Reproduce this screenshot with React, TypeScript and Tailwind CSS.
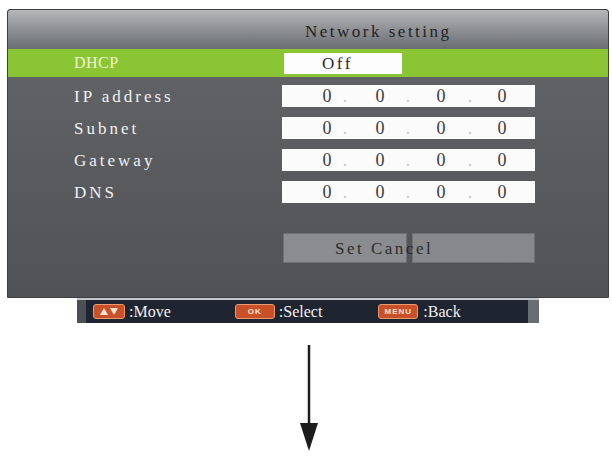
import React from "react";

const serif = { fontFamily: '"Liberation Serif", "DejaVu Serif", serif' };

type RowProps = {
  label: string;
};

function IpRow({ label }: RowProps) {
  return (
    <div className="flex items-center h-[22px]">
      <div className="w-[274px] pl-[66px] text-[17px] tracking-[3px] text-[#f1f1f1] leading-none" style={serif}>
        {label}
      </div>
      <div className="flex items-center w-[253px] h-[22px] bg-[#fbfbfb] text-[18px] text-[#3a3a3a] leading-none" style={serif}>
        <span className="ml-[39px] w-[12px] text-center">0</span>
        <span className="ml-[6px] w-[12px] text-center text-[#c8c8c8]">.</span>
        <span className="ml-[23px] w-[12px] text-center">0</span>
        <span className="ml-[16px] w-[12px] text-center text-[#c8c8c8]">.</span>
        <span className="ml-[21px] w-[12px] text-center">0</span>
        <span className="ml-[17px] w-[12px] text-center text-[#c8c8c8]">.</span>
        <span className="ml-[20px] w-[12px] text-center">0</span>
      </div>
    </div>
  );
}

function KeyCap({ children, w }: { children: React.ReactNode; w: string }) {
  return (
    <span
      className={`${w} h-[15px] flex items-center justify-center rounded-[3px] bg-[#c9512a] border border-[#eb9a6c] text-[8px] font-bold text-[#fbe3d2] leading-none tracking-[1px]`}
      style={{ fontFamily: '"Liberation Sans", Arial, sans-serif' }}
    >
      {children}
    </span>
  );
}

export default function App() {
  const rows = ["IP address", "Subnet", "Gateway", "DNS"];

  return (
    <div className="w-[612px] h-[456px] bg-white flex flex-col overflow-hidden">
      <div className="ml-[7px] mt-[9px] w-[602px] h-[289px] flex flex-col bg-gradient-to-b from-[#65676b] via-[#5a5c60] to-[#505256] border border-[#3c3e42] rounded-t-[3px]">
        <div className="h-[39px] flex items-center pl-[297px] pt-[3px] bg-gradient-to-b from-[#b5b7ba] via-[#8e9094] to-[#6a6d72] rounded-t-[3px]">
          <span className="text-[17px] tracking-[2.5px] text-[#222222] leading-none" style={serif}>
            Network setting
          </span>
        </div>

        <div className="h-[28px] flex items-center bg-[#8ac634]">
          <div className="w-[276px] pl-[66px] text-[16px] tracking-[0.5px] text-[#f3f7cf] leading-none" style={serif}>
            DHCP
          </div>
          <div className="w-[118px] h-[21px] bg-[#fdfdfd] flex items-center pl-[38px] text-[17px] tracking-[2.5px] text-[#2a2a2a] leading-none" style={serif}>
            Off
          </div>
        </div>

        <div className="flex flex-col gap-[10px] pt-[8px]">
          {rows.map((r) => (
            <IpRow key={r} label={r} />
          ))}
        </div>

        <div className="flex mt-[30px] ml-[275px] h-[30px] gap-[5px]">
          <div className="relative z-10 w-[124px] h-[30px] bg-[#8a8c8f] border border-[#6e7073] flex items-center">
            <span className="ml-[51px] whitespace-nowrap text-[17px] tracking-[2.5px] text-[#2b2c2e] leading-none" style={serif}>
              Set Cancel
            </span>
          </div>
          <div className="w-[123px] h-[30px] bg-[#88898c] border border-[#6e7073]" />
        </div>
      </div>

      <div className="ml-[77px] w-[462px] h-[25px] flex flex-col">
        <div className="h-[2px] bg-[#c3c6ca]" />
        <div className="flex-1 flex items-center bg-[#1f2530] border-l-[9px] border-l-[#4b4f56] border-r-[11px] border-r-[#6a6d72] text-[16px] text-[#f0f0f0] leading-none" style={serif}>
          <span className="ml-[7px]">
            <KeyCap w="w-[32px]">
              <svg width="20" height="9" viewBox="0 0 20 9">
                <polygon points="1,8 5,1 9,8" fill="#fbe3d2" />
                <polygon points="11,1 19,1 15,8" fill="#fbe3d2" />
              </svg>
            </KeyCap>
          </span>
          <span className="ml-[4px]">:Move</span>
          <span className="ml-[64px]">
            <KeyCap w="w-[40px]">OK</KeyCap>
          </span>
          <span className="ml-[4px]">:Select</span>
          <span className="ml-[56px]">
            <KeyCap w="w-[40px]">MENU</KeyCap>
          </span>
          <span className="ml-[5px]">:Back</span>
        </div>
      </div>

      <div className="flex justify-center mt-[22px] pl-[6px]">
        <svg width="22" height="108" viewBox="0 0 22 108">
          <line x1="11" y1="0" x2="11" y2="82" stroke="#1c1c1c" strokeWidth="2.5" />
          <polygon points="2,78 20,78 11,106" fill="#1c1c1c" />
        </svg>
      </div>
    </div>
  );
}
